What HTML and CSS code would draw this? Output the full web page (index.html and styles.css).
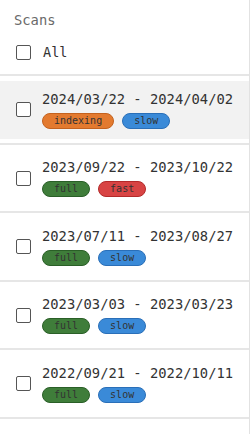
FILE: index.html
```html
<!DOCTYPE html>
<html>
<head>
<meta charset="utf-8">
<link rel="stylesheet" href="styles.css">
</head>
<body>
<div class="panel">
  <div class="header">
    <div class="title">Scans</div>
    <label class="all"><span class="box"></span><span class="all-text">All</span></label>
  </div>
  <ul class="list">
    <li class="row active"><div class="item"><span class="box"></span><div class="info"><div class="date">2024/03/22 - 2024/04/02</div><div class="chips"><span class="chip orange">indexing</span><span class="chip blue">slow</span></div></div></div></li>
    <li class="row"><div class="item"><span class="box"></span><div class="info"><div class="date">2023/09/22 - 2023/10/22</div><div class="chips"><span class="chip green">full</span><span class="chip red">fast</span></div></div></div></li>
    <li class="row"><div class="item"><span class="box"></span><div class="info"><div class="date">2023/07/11 - 2023/08/27</div><div class="chips"><span class="chip green">full</span><span class="chip blue">slow</span></div></div></div></li>
    <li class="row"><div class="item"><span class="box"></span><div class="info"><div class="date">2023/03/03 - 2023/03/23</div><div class="chips"><span class="chip green">full</span><span class="chip blue">slow</span></div></div></div></li>
    <li class="row"><div class="item"><span class="box"></span><div class="info"><div class="date">2022/09/21 - 2022/10/11</div><div class="chips"><span class="chip green">full</span><span class="chip blue">slow</span></div></div></div></li>
  </ul>
</div>
</body>
</html>
```
FILE: styles.css
```css
html, body {
  margin: 0;
  padding: 0;
  background: #fff;
}
.panel {
  width: 249px;
  height: 434px;
  border-right: 1px solid #e2e2e2;
  font-family: "DejaVu Sans Mono", "Liberation Mono", monospace;
  color: #333;
}
.header {
  height: 76px;
  box-sizing: border-box;
  border-bottom: 2px solid #e6e6e6;
  padding: 11px 0 0 14px;
}
.title {
  font-size: 13.8px;
  color: #6a6a6a;
  line-height: 18px;
}
.all {
  display: flex;
  align-items: center;
  margin-top: 15px;
  margin-left: 2px;
}
.all-text {
  font-size: 13.5px;
  margin-left: 12px;
  color: #333;
}
.box {
  width: 15px;
  height: 15px;
  box-sizing: border-box;
  border: 1.5px solid #555;
  border-radius: 2px;
  flex: none;
  background: #fff;
}
.list {
  list-style: none;
  margin: 0;
  padding: 0;
}
.row {
  height: 67px;
  border-bottom: 2px solid #e6e6e6;
  display: flex;
  align-items: center;
}
.row:nth-child(even) {
  height: 66px;
}
.item {
  flex: 1;
  display: flex;
  align-items: center;
  height: 58px;
  padding-left: 16px;
  box-sizing: border-box;
}
.row.active .item {
  background: #f2f2f2;
}
.info {
  margin-left: 11px;
  display: flex;
  flex-direction: column;
  gap: 5px;
}
.date {
  font-size: 13.8px;
  line-height: 17px;
  color: #333;
}
.chips {
  display: flex;
  gap: 8px;
}
.chip {
  font-size: 10px;
  line-height: 14px;
  padding: 0 11px;
  border-radius: 8px;
  border: 1px solid;
  color: #333;
}
.orange { background: #e37a2f; border-color: #c4621e; }
.blue { background: #3a8ad8; border-color: #2a6fb8; }
.green { background: #3f7d3a; border-color: #2a5f27; }
.red { background: #d84444; border-color: #b32a2a; }
```
